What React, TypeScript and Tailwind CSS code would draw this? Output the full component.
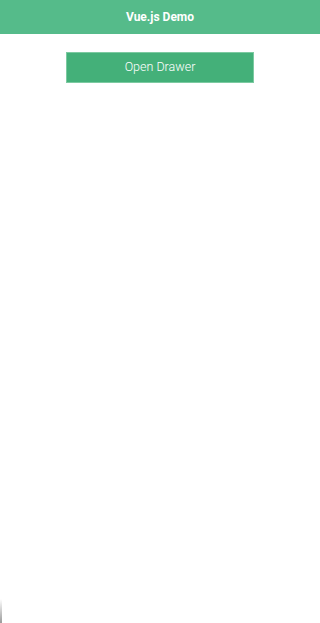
export default function App() {
  return (
    <div className="relative flex h-[623px] w-[320px] flex-col bg-white" style={{ fontFamily: 'Roboto, "Liberation Sans", sans-serif' }}>
      <header className="flex h-[34px] items-center justify-center bg-[#55bb8a]">
        <span className="text-[12px] font-bold text-white">Vue.js Demo</span>
      </header>
      <div className="flex justify-center pt-[18px]">
        <button className="flex h-[31px] w-[188px] items-center justify-center border border-[#7ccaa1] bg-[#44b079] text-[12.5px] font-light text-white">
          Open Drawer
        </button>
      </div>
      <div className="pointer-events-none absolute bottom-0 left-0 h-[24px] w-[2px] bg-gradient-to-b from-transparent to-[#9a9a9a]" />
    </div>
  );
}
